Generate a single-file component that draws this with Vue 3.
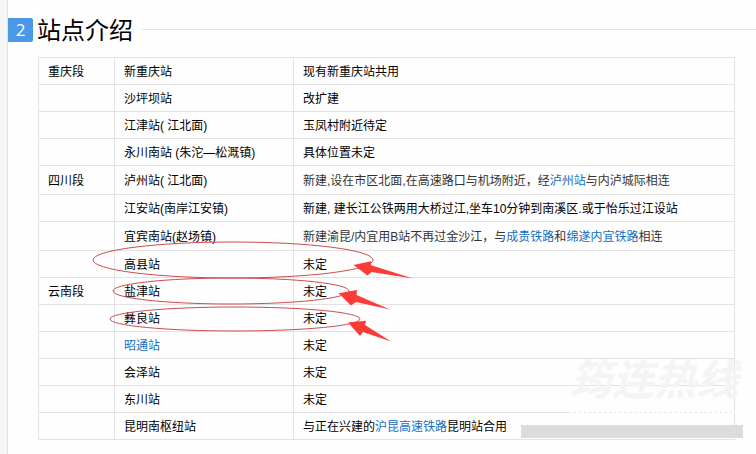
<script setup>
// each remark is a list of parts, parts with `link` are rendered as anchors
const rows = [
  { section: '重庆段', station: '新重庆站', remark: [{ text: '现有新重庆站共用' }] },
  { section: '', station: '沙坪坝站', remark: [{ text: '改扩建' }] },
  { section: '', station: '江津站( 江北面)', remark: [{ text: '玉凤村附近待定' }] },
  { section: '', station: '永川南站 (朱沱—松溉镇)', remark: [{ text: '具体位置未定' }] },
  {
    section: '四川段',
    station: '泸州站( 江北面)',
    note: true,
    remark: [
      { text: '新建,设在市区北面,在高速路口与机场附近，经' },
      { text: '泸州站', link: true },
      { text: '与内泸城际相连' },
    ],
  },
  {
    section: '',
    station: '江安站(南岸江安镇)',
    remark: [{ text: '新建, 建长江公铁两用大桥过江,坐车10分钟到南溪区.或于怡乐过江设站' }],
  },
  {
    section: '',
    station: '宜宾南站(赵场镇)',
    note: true,
    remark: [
      { text: '新建渝昆/内宜用B站不再过金沙江，与' },
      { text: '成贵铁路', link: true },
      { text: '和' },
      { text: '绵遂内宜铁路', link: true },
      { text: '相连' },
    ],
  },
  { section: '', station: '高县站', remark: [{ text: '未定' }] },
  { section: '云南段', station: '盐津站', remark: [{ text: '未定' }] },
  { section: '', station: '彝良站', remark: [{ text: '未定' }] },
  { section: '', station: '昭通站', stationLink: true, remark: [{ text: '未定' }] },
  { section: '', station: '会泽站', remark: [{ text: '未定' }] },
  { section: '', station: '东川站', remark: [{ text: '未定' }] },
  {
    section: '',
    station: '昆明南枢纽站',
    remark: [
      { text: '与正在兴建的' },
      { text: '沪昆高速铁路', link: true },
      { text: '昆明站合用' },
    ],
  },
]

const circles = [
  { cx: 195, cy: 203, rx: 140, ry: 18 },
  { cx: 193, cy: 234, rx: 118, ry: 13 },
  { cx: 197, cy: 262, rx: 125, ry: 12 },
]

const arrows = [
  '315.5,208 333,204.3 333,208.3 375,221.5 333.5,215 329.5,218.5',
  '300.6,236.3 319,233 318.5,238 352,252.6 318,245 313,248.5',
  '310,265.5 328,263.7 327,268 353,284.5 325,275 322,279',
]
</script>

<template>
  <main class="page">
    <header class="heading">
      <span class="heading-no">2</span>
      <h2 class="heading-title">站点介绍</h2>
      <span class="heading-line"></span>
    </header>

    <div class="table-wrap">
      <table class="stations">
        <colgroup>
          <col class="col-section" />
          <col class="col-station" />
          <col />
        </colgroup>
        <tbody>
          <tr v-for="row in rows" :key="row.station" :class="{ note: row.note }">
            <td>{{ row.section }}</td>
            <td>
              <a v-if="row.stationLink" href="#">{{ row.station }}</a>
              <template v-else>{{ row.station }}</template>
            </td>
            <td class="remark">
              <template v-for="(part, i) in row.remark" :key="i">
                <a v-if="part.link" href="#">{{ part.text }}</a>
                <template v-else>{{ part.text }}</template>
              </template>
            </td>
          </tr>
        </tbody>
      </table>

      <div class="watermark">
        <span class="watermark-name">筠连热线</span>
        <span class="watermark-dash"></span>
        <span class="watermark-bar"></span>
      </div>

      <svg class="marks" width="400" height="300" viewBox="0 0 400 300" aria-hidden="true">
        <ellipse
          v-for="c in circles"
          :key="c.cy"
          :cx="c.cx"
          :cy="c.cy"
          :rx="c.rx"
          :ry="c.ry"
        />
        <polygon v-for="points in arrows" :key="points" :points="points" />
      </svg>
    </div>
  </main>
</template>

<style>
body {
  margin: 0;
  background-color: #f5f5f5;
}
</style>

<style scoped>
.page {
  box-sizing: border-box;
  min-height: 100vh;
  margin-left: 7px;
  padding-top: 18px;
  border-left: 1px solid #e3e3e3;
  background-color: #fefefe;
  color: #000;
  font-family: 'Liberation Sans', 'Noto Sans CJK SC', sans-serif;
  font-size: 12px;
}

.heading {
  display: flex;
  align-items: center;
  height: 24px;
}

.heading-no {
  box-sizing: border-box;
  width: 25px;
  height: 24px;
  border-radius: 0 2px 2px 0;
  background-color: #4c98e8;
  color: #fff;
  font-family: 'Open Sans', sans-serif;
  font-size: 17px;
  line-height: 24px;
  text-align: center;
}

.heading-title {
  margin: 0 9px 0 4px;
  padding-top: 2px;
  font-size: 24px;
  font-weight: 400;
  line-height: 24px;
}

.heading-line {
  flex: 1;
  height: 1px;
  margin-bottom: 1px;
  background-color: #e3e3e3;
}

.table-wrap {
  position: relative;
  margin: 15px 21px 0 30px;
}

.stations {
  width: 100%;
  border-collapse: collapse;
  table-layout: fixed;
}

.col-section {
  width: 76px;
}

.col-station {
  width: 179px;
}

td {
  height: 24px;
  padding: 2px 9px 0;
  border: 1px solid #e3e3e3;
  line-height: 22px;
  white-space: nowrap;
}

.note td {
  height: 26px;
}

.note .remark {
  color: #333;
}

a {
  color: #136ec2;
  text-decoration: none;
}

.watermark {
  position: absolute;
  right: -8px;
  bottom: 2px;
  display: flex;
  flex-direction: column;
  align-items: flex-end;
}

.watermark-name {
  margin-right: 5px;
  color: #f4f4f4;
  font-size: 42px;
  font-style: italic;
  font-weight: 700;
  line-height: 48px;
}

.watermark-dash {
  width: 164px;
  margin: 7px 8px 12px 0;
  border-top: 1px dashed #fefefe;
}

.watermark-bar {
  width: 222px;
  height: 13px;
  background-color: #dcdcdc;
}

.marks {
  position: absolute;
  top: 0;
  left: 0;
}

.marks ellipse {
  fill: none;
  stroke: #d04c4c;
  stroke-width: 1;
}

.marks polygon {
  fill: #fb3b37;
}
</style>
